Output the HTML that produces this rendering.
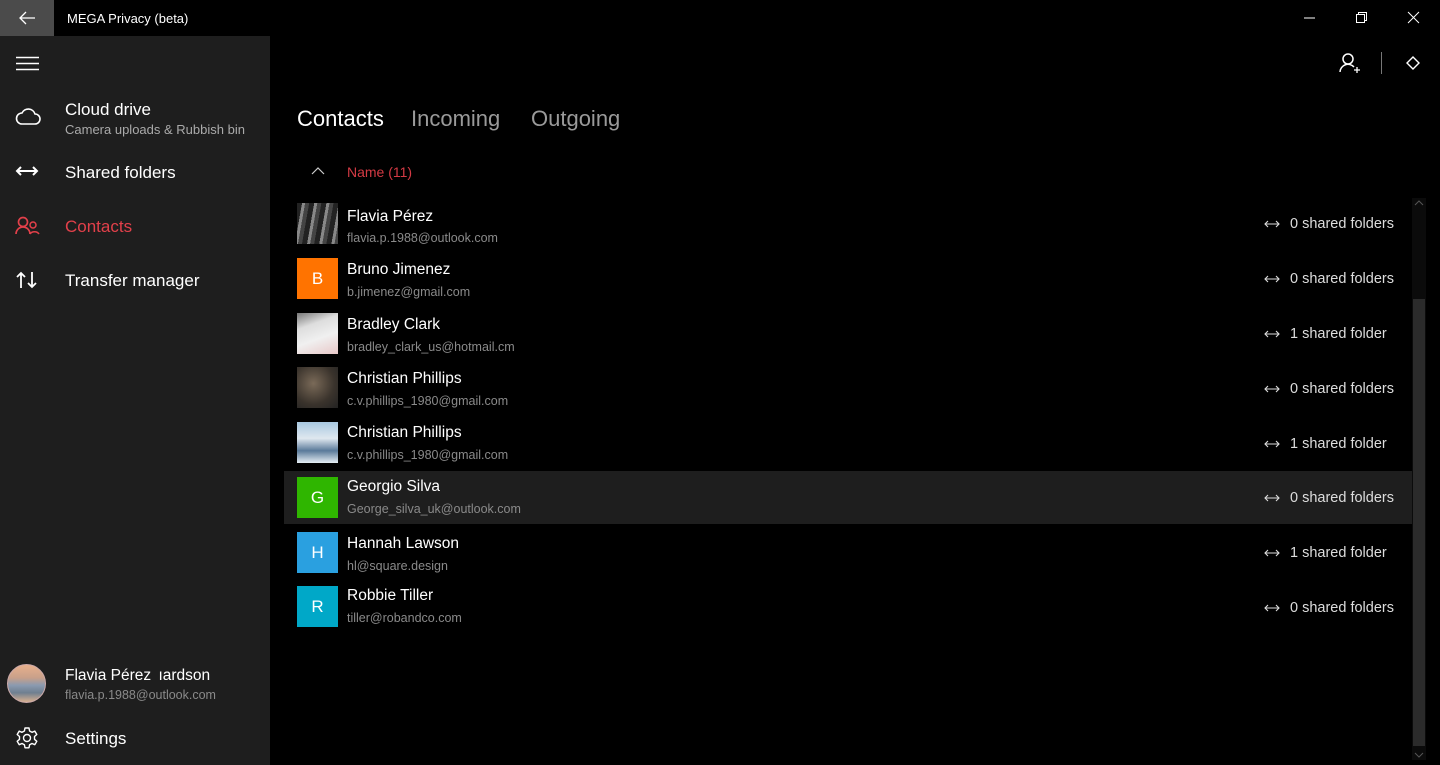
<!DOCTYPE html>
<html><head><meta charset="utf-8"><style>
*{margin:0;padding:0;box-sizing:border-box}
body{width:1440px;height:765px;background:#000;color:#fff;font-family:"Segoe UI","Liberation Sans",sans-serif;overflow:hidden;position:relative}
.abs{position:absolute}
.side{left:0;top:36px;width:270px;height:729px;background:#1e1e1e}
.back{left:0;top:0;width:54px;height:36px;background:#4b4b4b}
.t{white-space:nowrap}
.row .n{position:absolute;left:347px;font-size:15.5px;color:#fff;white-space:nowrap}
.row .e{position:absolute;left:347px;font-size:12.5px;color:#8a8a8a;white-space:nowrap}
.av{position:absolute;left:297px;width:41px;height:41px;color:#fff;font-size:17px;text-align:center;line-height:41px}
.sh{position:absolute;left:1290px;font-size:14.5px;color:#ddd;white-space:nowrap}
.ic{position:absolute;left:1263px}
</style></head><body>
<div class="abs back"></div>
<svg class="abs" style="left:18px;top:10px" width="18" height="16" viewBox="0 0 18 16"><path d="M17 8H2M8 2L2 8l6 6" stroke="#fff" stroke-width="1.3" fill="none"/></svg>
<div class="abs t" style="left:67px;top:11px;font-size:13px">MEGA Privacy (beta)</div>
<svg class="abs" style="left:1300px;top:8px" width="130" height="20"><path d="M4 10h11" stroke="#fff"/><rect x="56.5" y="6.5" width="8" height="8" stroke="#fff" fill="none"/><path d="M58.5 6.5v-2h8v8h-2" stroke="#fff" fill="none"/><path d="M108 4l11 11M119 4l-11 11" stroke="#fff"/></svg>

<div class="abs side"></div>
<svg class="abs" style="left:16px;top:56px" width="24" height="16"><path d="M0 1.5h23M0 7.5h23M0 13.5h23" stroke="#fff" stroke-width="1.4"/></svg>
<svg class="abs" style="left:15px;top:106px" width="26" height="20" viewBox="0 0 26 20"><path d="M7 18h13a5 5 0 0 0 0-10 7 7 0 0 0-13-1 5.5 5.5 0 0 0 0 11z" stroke="#fff" stroke-width="1.6" fill="none"/></svg>
<div class="abs t" style="left:65px;top:100px;font-size:17px">Cloud drive</div>
<div class="abs t" style="left:65px;top:122px;font-size:13px;color:#aaa">Camera uploads &amp; Rubbish bin</div>
<svg class="abs" style="left:15px;top:164px" width="24" height="14"><path d="M3 7h18M6 3L2 7l4 4M18 3l4 4-4 4" stroke="#fff" stroke-width="2" fill="none"/></svg>
<div class="abs t" style="left:65px;top:163px;font-size:17px">Shared folders</div>
<svg class="abs" style="left:15px;top:216px" width="26" height="20"><circle cx="8" cy="6" r="4.5" stroke="#e2404a" stroke-width="1.7" fill="none"/><path d="M1 18a7 7 0 0 1 14 0" stroke="#e2404a" stroke-width="1.7" fill="none"/><circle cx="18" cy="9" r="3" stroke="#e2404a" stroke-width="1.5" fill="none"/><path d="M15 18a5 4 0 0 1 9 0" stroke="#e2404a" stroke-width="1.5" fill="none"/></svg>
<div class="abs t" style="left:65px;top:217px;font-size:17px;color:#e2404a">Contacts</div>
<svg class="abs" style="left:15px;top:270px" width="26" height="20"><path d="M6 18V3M2 7l4-4 4 4M17 2v15M13 13l4 4 4-4" stroke="#fff" stroke-width="1.8" fill="none"/></svg>
<div class="abs t" style="left:65px;top:271px;font-size:17px">Transfer manager</div>

<div class="abs" style="left:7px;top:664px;width:39px;height:39px;border-radius:50%;background:linear-gradient(#e8b08c 0%,#c8a08a 35%,#8a9ab0 55%,#6f7f90 75%,#d8b090 100%);border:1px solid #caa"></div>
<div class="abs t" style="left:65px;top:667px;font-size:15.5px">Flavia Pérez <span style="margin-left:3px">ıardson</span></div>
<div class="abs t" style="left:65px;top:688px;font-size:12.5px;color:#8a8a8a">flavia.p.1988@outlook.com</div>
<svg class="abs" style="left:15px;top:726px" width="24" height="24" viewBox="0 0 24 24"><path d="M10 2h4l.6 3 2.4 1.3 2.8-1.2 2 3.4-2.3 2v2.8l2.3 2-2 3.4-2.8-1.2-2.4 1.3-.6 3h-4l-.6-3L7 17.5l-2.8 1.2-2-3.4 2.3-2v-2.8l-2.3-2 2-3.4L7 6.3 9.4 5z" stroke="#fff" stroke-width="1.4" fill="none" stroke-linejoin="round"/><circle cx="12" cy="12" r="3.5" stroke="#fff" stroke-width="1.4" fill="none"/></svg>
<div class="abs t" style="left:65px;top:729px;font-size:17px">Settings</div>

<svg class="abs" style="left:1338px;top:52px" width="24" height="22"><circle cx="10" cy="7" r="5" stroke="#fff" stroke-width="1.5" fill="none"/><path d="M2 20a8 8 0 0 1 14-5" stroke="#fff" stroke-width="1.5" fill="none"/><path d="M19 15v6M16 18h6" stroke="#fff" stroke-width="1.3"/></svg>
<div class="abs" style="left:1381px;top:52px;width:1px;height:22px;background:#777"></div>
<svg class="abs" style="left:1405px;top:55px" width="16" height="16"><path d="M8 2l6 6-6 6-6-6z" stroke="#fff" stroke-width="1.4" fill="none"/></svg>

<div class="abs t" style="left:297px;top:106px;font-size:22px">Contacts</div>
<div class="abs t" style="left:411px;top:106px;font-size:22px;color:#9a9a9a">Incoming</div>
<div class="abs t" style="left:531px;top:106px;font-size:22px;color:#9a9a9a">Outgoing</div>
<svg class="abs" style="left:311px;top:167px" width="14" height="8"><path d="M1 7l6-6 6 6" stroke="#ccc" stroke-width="1.2" fill="none"/></svg>
<div class="abs t" style="left:347px;top:164px;font-size:14px;color:#d43a44">Name (11)</div>

<div class="abs" style="left:284px;top:471px;width:1129px;height:53px;background:#1e1e1e"></div>
<div class="abs" style="left:1412px;top:198px;width:14px;height:562px;background:#0b0b0b"></div>
<div class="abs" style="left:1413px;top:299px;width:12px;height:447px;background:#2b2b2b"></div>
<svg class="abs" style="left:1414px;top:200px" width="10" height="6"><path d="M1 5l4-4 4 4" stroke="#555" fill="none"/></svg>
<svg class="abs" style="left:1414px;top:752px" width="10" height="6"><path d="M1 1l4 4 4-4" stroke="#555" fill="none"/></svg>

<svg width="0" height="0" style="position:absolute"><defs><symbol id="sh" viewBox="0 0 18 10"><path d="M2 5h14M5 2L2 5l3 3M13 2l3 3-3 3" stroke="#ddd" stroke-width="1.1" fill="none" stroke-dasharray="none"/></symbol></defs></svg>

<div class="row">
<div class="av" style="top:203px;background:repeating-linear-gradient(100deg,#222 0 5px,#888 5px 8px,#444 8px 12px)"></div>
<div class="n" style="top:208px">Flavia Pérez</div><div class="e" style="top:231px">flavia.p.1988@outlook.com</div>
<svg class="ic" style="top:219px" width="18" height="10"><use href="#sh"/></svg><div class="sh" style="top:216px">0 shared folders</div>

<div class="av" style="top:258px;background:#ff7300">B</div>
<div class="n" style="top:261px">Bruno Jimenez</div><div class="e" style="top:285px">b.jimenez@gmail.com</div>
<svg class="ic" style="top:274px" width="18" height="10"><use href="#sh"/></svg><div class="sh" style="top:271px">0 shared folders</div>

<div class="av" style="top:313px;background:linear-gradient(160deg,#777 0,#ddd 30%,#f0f0f0 60%,#e8c8c8 100%)"></div>
<div class="n" style="top:316px">Bradley Clark</div><div class="e" style="top:340px">bradley_clark_us@hotmail.cm</div>
<svg class="ic" style="top:329px" width="18" height="10"><use href="#sh"/></svg><div class="sh" style="top:326px">1 shared folder</div>

<div class="av" style="top:367px;background:radial-gradient(circle at 40% 40%,#7a6a58,#3a332c 60%,#222)"></div>
<div class="n" style="top:370px">Christian Phillips</div><div class="e" style="top:394px">c.v.phillips_1980@gmail.com</div>
<svg class="ic" style="top:384px" width="18" height="10"><use href="#sh"/></svg><div class="sh" style="top:381px">0 shared folders</div>

<div class="av" style="top:422px;background:linear-gradient(#a8c8e0 0,#dfe8ef 40%,#5a7a9a 70%,#e6eef4 100%)"></div>
<div class="n" style="top:424px">Christian Phillips</div><div class="e" style="top:448px">c.v.phillips_1980@gmail.com</div>
<svg class="ic" style="top:439px" width="18" height="10"><use href="#sh"/></svg><div class="sh" style="top:436px">1 shared folder</div>

<div class="av" style="top:477px;background:#2fb600">G</div>
<div class="n" style="top:478px">Georgio Silva</div><div class="e" style="top:502px">George_silva_uk@outlook.com</div>
<svg class="ic" style="top:493px" width="18" height="10"><use href="#sh"/></svg><div class="sh" style="top:490px">0 shared folders</div>

<div class="av" style="top:532px;background:#2aa0e0">H</div>
<div class="n" style="top:535px">Hannah Lawson</div><div class="e" style="top:559px">hl@square.design</div>
<svg class="ic" style="top:548px" width="18" height="10"><use href="#sh"/></svg><div class="sh" style="top:545px">1 shared folder</div>

<div class="av" style="top:586px;background:#00a8c8">R</div>
<div class="n" style="top:587px">Robbie Tiller</div><div class="e" style="top:611px">tiller@robandco.com</div>
<svg class="ic" style="top:603px" width="18" height="10"><use href="#sh"/></svg><div class="sh" style="top:600px">0 shared folders</div>
</div>
</body></html>
